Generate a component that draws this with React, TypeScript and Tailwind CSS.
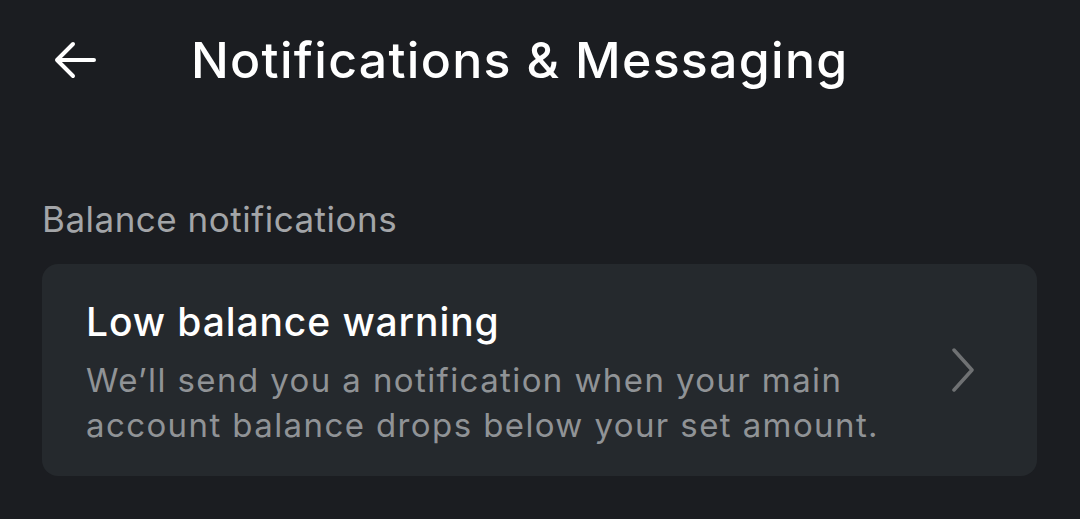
import React from "react";

function BackArrow() {
   return (
      <svg width="46" height="40" viewBox="0 0 46 40" fill="none" className="text-white">
         <path d="M42 20H5M21 4L5 20l16 16" stroke="currentColor" strokeWidth="4" strokeLinecap="round" strokeLinejoin="round" />
      </svg>
   );
}

function Chevron() {
   return (
      <svg width="24" height="44" viewBox="0 0 24 44" fill="none">
         <path d="M3 2l18 20L3 42" stroke="#6f7173" strokeWidth="3.5" strokeLinecap="round" strokeLinejoin="round" />
      </svg>
   );
}

export default function App() {
   return (
      <div className="w-[1080px] h-[519px] bg-[#1b1d21] overflow-hidden font-['Inter',sans-serif]">
         {/* Header */}
         <div className="flex items-center h-[124px] pl-[52px] pb-1">
            <BackArrow />
            <h1 className="ml-[93px] text-[50px] font-medium text-white tracking-[1.3px]">
               Notifications &amp; Messaging
            </h1>
         </div>

         {/* Section */}
         <div className="px-[42px] pt-[73px]">
            <p className="text-[35px] leading-[44px] tracking-[0.5px] text-[#a3a5a8]">Balance notifications</p>
            <div className="mt-[23px] w-[995px] h-[212px] rounded-[16px] bg-[#25292d] flex items-center pl-[44px] pr-[62px]">
               <div className="flex-1 pt-[6px]">
                  <p className="text-[39px] font-medium leading-[46px] tracking-[0.9px] text-white">Low balance warning</p>
                  <p className="mt-[13px] text-[33px] leading-[45px] tracking-[1.4px] text-[#909396]">
                     We’ll send you a notification when your main
                     <br />
                     account balance drops below your set amount.
                  </p>
               </div>
               <Chevron />
            </div>
         </div>
      </div>
   );
}
